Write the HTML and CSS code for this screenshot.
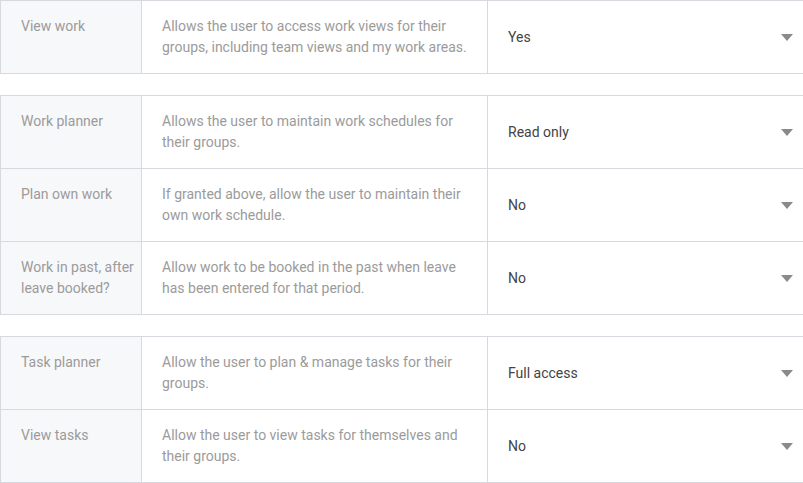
FILE: index.html
```html
<!DOCTYPE html>
<html lang="en">
<head>
    <meta charset="UTF-8">
    <meta name="viewport" content="width=device-width, initial-scale=1.0">
    <title>Permissions</title>
    <link rel="stylesheet" href="styles.css">
</head>
<body>
    <table class="perm-table">
        <colgroup>
            <col class="col-name">
            <col class="col-desc">
            <col class="col-value">
        </colgroup>
        <tr>
            <th>View work</th>
            <td class="desc">Allows the user to access work views for their groups, including team views and my work areas.</td>
            <td class="value"><div class="select"><span>Yes</span><span class="caret"></span></div></td>
        </tr>
    </table>

    <table class="perm-table">
        <colgroup>
            <col class="col-name">
            <col class="col-desc">
            <col class="col-value">
        </colgroup>
        <tr>
            <th>Work planner</th>
            <td class="desc">Allows the user to maintain work schedules for their groups.</td>
            <td class="value"><div class="select"><span>Read only</span><span class="caret"></span></div></td>
        </tr>
        <tr>
            <th>Plan own work</th>
            <td class="desc">If granted above, allow the user to maintain their own work schedule.</td>
            <td class="value"><div class="select"><span>No</span><span class="caret"></span></div></td>
        </tr>
        <tr>
            <th>Work in past, after leave booked?</th>
            <td class="desc">Allow work to be booked in the past when leave has been entered for that period.</td>
            <td class="value"><div class="select"><span>No</span><span class="caret"></span></div></td>
        </tr>
    </table>

    <table class="perm-table">
        <colgroup>
            <col class="col-name">
            <col class="col-desc">
            <col class="col-value">
        </colgroup>
        <tr>
            <th>Task planner</th>
            <td class="desc">Allow the user to plan &amp; manage tasks for their groups.</td>
            <td class="value"><div class="select"><span>Full access</span><span class="caret"></span></div></td>
        </tr>
        <tr>
            <th>View tasks</th>
            <td class="desc">Allow the user to view tasks for themselves and their groups.</td>
            <td class="value"><div class="select"><span>No</span><span class="caret"></span></div></td>
        </tr>
    </table>
</body>
</html>
```

FILE: styles.css
```css
body {
    margin: 0;
    font-family: Roboto, "Liberation Sans", Arial, sans-serif;
    font-size: 14px;
    line-height: 21px;
    background-color: white;
}

.perm-table {
    width: 803px;
    table-layout: fixed;
    border-collapse: collapse;
    margin-bottom: 21px;
}

.col-name {
    width: 141px;
}

.col-desc {
    width: 346px;
}

.col-value {
    width: 316px;
}

.perm-table th,
.perm-table td {
    border: 1px solid #d6d9de;
    padding: 15px 20px;
    height: 42px;
    vertical-align: top;
    text-align: left;
    font-weight: normal;
    color: #9b9b9b;
}

.perm-table th {
    background-color: #f7f8fa;
    padding-right: 4px;
}

.perm-table td.value {
    vertical-align: middle;
    color: #444;
    padding-right: 10px;
}

.select {
    display: flex;
    justify-content: space-between;
    align-items: center;
}

.caret {
    width: 0;
    height: 0;
    border-left: 6px solid transparent;
    border-right: 6px solid transparent;
    border-top: 7px solid #8a8a8a;
}
```
